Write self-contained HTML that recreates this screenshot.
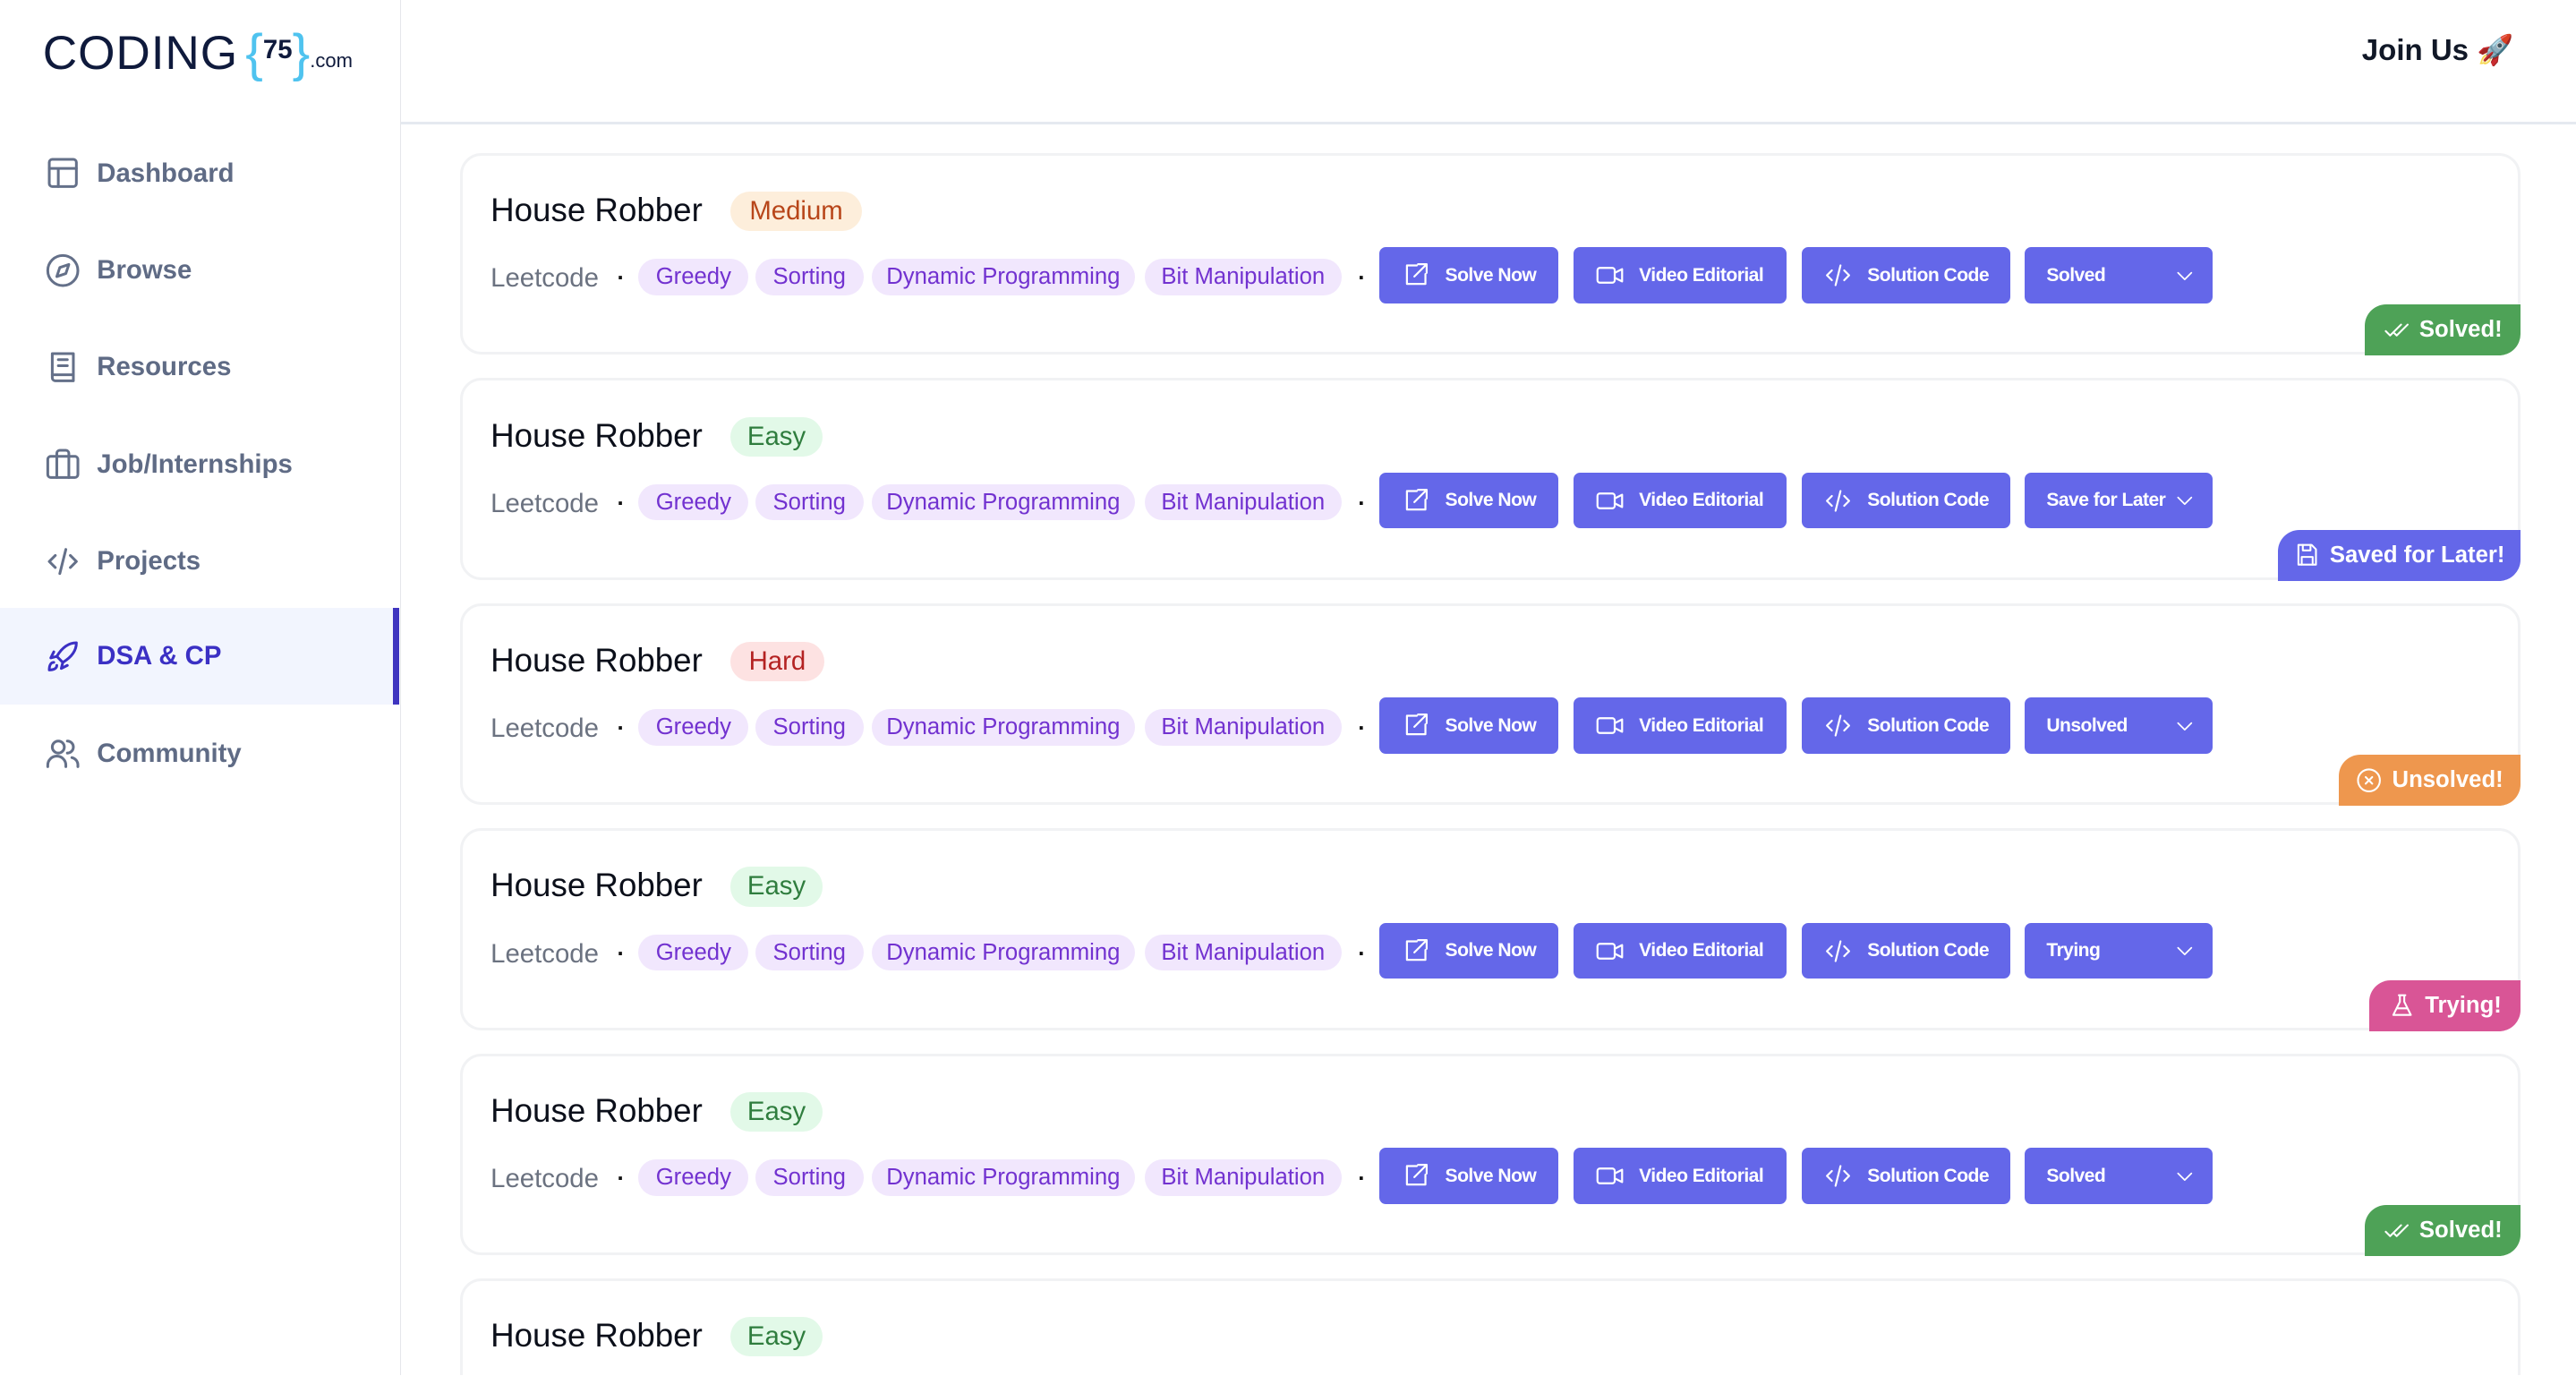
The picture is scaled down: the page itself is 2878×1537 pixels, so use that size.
<!DOCTYPE html>
<html><head><meta charset="utf-8">
<style>
*{box-sizing:border-box;margin:0;padding:0}
html,body{width:2878px;height:1537px;overflow:hidden;background:#fff}
#w{zoom:1.8355;width:1568px;height:837px;position:relative;font-family:"Liberation Sans",sans-serif;overflow:hidden}
.side{position:absolute;left:0;top:0;width:244px;height:837px;border-right:1px solid #e5e7eb}
.logo{position:absolute;left:26px;top:14px;white-space:nowrap;color:#0f1a3c}
.logo .c{font-size:29px;letter-spacing:0.5px;font-weight:300;vertical-align:middle}
.logo .b{color:#4fc3ef;font-size:32px;vertical-align:middle}
.logo .n{font-size:16px;font-weight:bold;vertical-align:middle;position:relative;top:-2px}
.logo .d{font-size:12px;vertical-align:middle;position:relative;top:5px}
.nav{position:absolute;left:0;width:243px;height:59px;display:flex;align-items:center;padding-left:27px;color:#5f6b85;font-size:16px;font-weight:bold}
.nav svg{width:22px;height:22px;margin-right:10px;fill:none;stroke:#647089;stroke-width:1.8;stroke-linecap:round;stroke-linejoin:round}
.nav.act{background:#f2f5fe;color:#3b30c4;border-right:4px solid #3f35c0}
.nav.act svg{stroke:#3b30c4}
.hdr{position:absolute;left:244px;top:0;right:0;height:76px;border-bottom:2px solid #e5e9f0}
.join{position:absolute;right:38px;top:20px;font-size:18px;font-weight:bold;color:#111827}
.card{position:absolute;left:280px;width:1254px;height:123px;border:2px solid #f1f2f4;border-radius:13px;background:#fff}
.t{position:absolute;left:17px;top:22px;font-size:20px;color:#0b0f1a}
.pill{position:absolute;left:163px;top:22px;height:24px;border-radius:12px;font-size:16px;line-height:24px;text-align:center}
.med{background:#fdeedb;color:#b8461a;width:80px}
.easy{background:#e2f9e8;color:#2f7d3e;width:56px}
.hard{background:#fde2e2;color:#b42222;width:57px}
.lc{position:absolute;left:17px;top:64px;line-height:22px;font-size:16px;color:#6b7280}
.dot{position:absolute;top:64px;line-height:22px;font-size:14px;color:#111;font-weight:bold}
.tag{position:absolute;top:63px;height:22px;line-height:22px;border-radius:11px;background:#f1e7fd;color:#7232d0;font-size:14px;text-align:center}
.btn{position:absolute;top:56px;height:34px;background:#6467e9;border-radius:4px;color:#fff;font-size:11.5px;letter-spacing:-0.3px;font-weight:bold;display:flex;align-items:center;padding-left:13px;white-space:nowrap}
.btn svg{width:18px;height:18px;margin-right:9px;fill:none;stroke:#fff;stroke-width:1.6;stroke-linecap:round;stroke-linejoin:round}
.dd{padding-left:13px}
.dd svg{position:absolute;right:10px;top:10px;width:14px;height:14px;margin:0}
.st{position:absolute;right:-2px;bottom:-2px;height:31px;border-radius:13px 0 13px 0;color:#fff;font-size:14px;font-weight:bold;display:flex;align-items:center;justify-content:center;white-space:nowrap}
.st svg{width:16px;height:16px;margin-right:6px;fill:none;stroke:#fff;stroke-width:1.7;stroke-linecap:round;stroke-linejoin:round}
</style></head><body><div id="w">
<div class="side">
 <div class="logo"><span class="c">CODING</span> <span class="b">{</span><span class="n">75</span><span class="b">}</span><span class="d">.com</span></div>
 <div class="nav" style="top:76px"><svg viewBox="0 0 24 24"><rect x="3" y="3" width="18" height="18" rx="2"/><path d="M3 9h18M9 9v12"/></svg>Dashboard</div>
 <div class="nav" style="top:135px"><svg viewBox="0 0 24 24"><circle cx="12" cy="12" r="10"/><path d="M16 8l-2 6-6 2 2-6z"/></svg>Browse</div>
 <div class="nav" style="top:194px"><svg viewBox="0 0 24 24"><path d="M5 3h14v18H7a2 2 0 0 1-2-2z"/><path d="M5 17h14M9 7h6M9 11h6"/></svg>Resources</div>
 <div class="nav" style="top:253px"><svg viewBox="0 0 24 24"><rect x="2" y="7" width="20" height="14" rx="2"/><path d="M8 21V5a2 2 0 0 1 2-2h4a2 2 0 0 1 2 2v16"/></svg>Job/Internships</div>
 <div class="nav" style="top:312px"><svg viewBox="0 0 24 24"><path d="M7 8l-4 4 4 4M17 8l4 4-4 4M14 4l-4 16"/></svg>Projects</div>
 <div class="nav act" style="top:370px"><svg viewBox="0 0 24 24"><path d="M21 3c-6 0-10 4-13 9l4 4c5-3 9-7 9-13z"/><path d="M8 12l-4 1 2-4M12 16l-1 4 4-2"/><path d="M6 16c-2 0-3 2-3 5 3 0 5-1 5-3"/></svg>DSA &amp; CP</div>
 <div class="nav" style="top:429px"><svg viewBox="0 0 24 24"><circle cx="9" cy="8" r="4"/><path d="M2 21v-1a6 6 0 0 1 12 0v1M15 4a4 4 0 0 1 0 8M18 15a5 5 0 0 1 4 5v1"/></svg>Community</div>
</div>
<div class="hdr"><div class="join">Join Us 🚀</div></div>

<div class="card" style="top:93px">
 <div class="t">House Robber</div><div class="pill med">Medium</div>
 <div class="lc">Leetcode</div><div class="dot" style="left:94px">·</div>
 <div class="tag" style="left:107px;width:67px">Greedy</div><div class="tag" style="left:178px;width:66px">Sorting</div><div class="tag" style="left:249px;width:160px">Dynamic Programming</div><div class="tag" style="left:415px;width:120px">Bit Manipulation</div>
 <div class="dot" style="left:545px">·</div>
 <div class="btn" style="left:558px;width:109px"><svg viewBox="0 0 24 24"><path d="M13 4H5v15h15v-8M14 3h7v7M21 3l-10 10"/></svg>Solve Now</div>
 <div class="btn" style="left:676px;width:130px"><svg viewBox="0 0 24 24"><rect x="2" y="6" width="14" height="12" rx="2"/><path d="M16 10l6-3v10l-6-3"/></svg>Video Editorial</div>
 <div class="btn" style="left:815px;width:127px"><svg viewBox="0 0 24 24"><path d="M7 8l-4 4 4 4M17 8l4 4-4 4M14 4l-4 16"/></svg>Solution Code</div>
 <div class="btn dd" style="left:951px;width:114px">Solved<svg viewBox="0 0 24 24"><path d="M5 9l7 7 7-7"/></svg></div>
 <div class="st" style="width:95px;background:#4ea257"><svg viewBox="0 0 24 24"><path d="M2 13l4 4L16 7M10 15l2 2 10-10"/></svg>Solved!</div>
</div>

<div class="card" style="top:230px">
 <div class="t">House Robber</div><div class="pill easy">Easy</div>
 <div class="lc">Leetcode</div><div class="dot" style="left:94px">·</div>
 <div class="tag" style="left:107px;width:67px">Greedy</div><div class="tag" style="left:178px;width:66px">Sorting</div><div class="tag" style="left:249px;width:160px">Dynamic Programming</div><div class="tag" style="left:415px;width:120px">Bit Manipulation</div>
 <div class="dot" style="left:545px">·</div>
 <div class="btn" style="left:558px;width:109px"><svg viewBox="0 0 24 24"><path d="M13 4H5v15h15v-8M14 3h7v7M21 3l-10 10"/></svg>Solve Now</div>
 <div class="btn" style="left:676px;width:130px"><svg viewBox="0 0 24 24"><rect x="2" y="6" width="14" height="12" rx="2"/><path d="M16 10l6-3v10l-6-3"/></svg>Video Editorial</div>
 <div class="btn" style="left:815px;width:127px"><svg viewBox="0 0 24 24"><path d="M7 8l-4 4 4 4M17 8l4 4-4 4M14 4l-4 16"/></svg>Solution Code</div>
 <div class="btn dd" style="left:951px;width:114px">Save for Later<svg viewBox="0 0 24 24"><path d="M5 9l7 7 7-7"/></svg></div>
 <div class="st" style="width:148px;background:#6467e9"><svg viewBox="0 0 24 24"><path d="M4 3h12l4 4v14H4z"/><path d="M8 3v5h7V3M7 21v-7h10v7"/></svg>Saved for Later!</div>
</div>

<div class="card" style="top:367px">
 <div class="t">House Robber</div><div class="pill hard">Hard</div>
 <div class="lc">Leetcode</div><div class="dot" style="left:94px">·</div>
 <div class="tag" style="left:107px;width:67px">Greedy</div><div class="tag" style="left:178px;width:66px">Sorting</div><div class="tag" style="left:249px;width:160px">Dynamic Programming</div><div class="tag" style="left:415px;width:120px">Bit Manipulation</div>
 <div class="dot" style="left:545px">·</div>
 <div class="btn" style="left:558px;width:109px"><svg viewBox="0 0 24 24"><path d="M13 4H5v15h15v-8M14 3h7v7M21 3l-10 10"/></svg>Solve Now</div>
 <div class="btn" style="left:676px;width:130px"><svg viewBox="0 0 24 24"><rect x="2" y="6" width="14" height="12" rx="2"/><path d="M16 10l6-3v10l-6-3"/></svg>Video Editorial</div>
 <div class="btn" style="left:815px;width:127px"><svg viewBox="0 0 24 24"><path d="M7 8l-4 4 4 4M17 8l4 4-4 4M14 4l-4 16"/></svg>Solution Code</div>
 <div class="btn dd" style="left:951px;width:114px">Unsolved<svg viewBox="0 0 24 24"><path d="M5 9l7 7 7-7"/></svg></div>
 <div class="st" style="width:111px;background:#ee974e"><svg viewBox="0 0 24 24"><circle cx="12" cy="12" r="10"/><path d="M9 9l6 6M15 9l-6 6"/></svg>Unsolved!</div>
</div>

<div class="card" style="top:504px">
 <div class="t">House Robber</div><div class="pill easy">Easy</div>
 <div class="lc">Leetcode</div><div class="dot" style="left:94px">·</div>
 <div class="tag" style="left:107px;width:67px">Greedy</div><div class="tag" style="left:178px;width:66px">Sorting</div><div class="tag" style="left:249px;width:160px">Dynamic Programming</div><div class="tag" style="left:415px;width:120px">Bit Manipulation</div>
 <div class="dot" style="left:545px">·</div>
 <div class="btn" style="left:558px;width:109px"><svg viewBox="0 0 24 24"><path d="M13 4H5v15h15v-8M14 3h7v7M21 3l-10 10"/></svg>Solve Now</div>
 <div class="btn" style="left:676px;width:130px"><svg viewBox="0 0 24 24"><rect x="2" y="6" width="14" height="12" rx="2"/><path d="M16 10l6-3v10l-6-3"/></svg>Video Editorial</div>
 <div class="btn" style="left:815px;width:127px"><svg viewBox="0 0 24 24"><path d="M7 8l-4 4 4 4M17 8l4 4-4 4M14 4l-4 16"/></svg>Solution Code</div>
 <div class="btn dd" style="left:951px;width:114px">Trying<svg viewBox="0 0 24 24"><path d="M5 9l7 7 7-7"/></svg></div>
 <div class="st" style="width:92px;background:#d95596"><svg viewBox="0 0 24 24"><path d="M9 3h6M10 3v6L4 21h16L14 9V3M7 15h10"/></svg>Trying!</div>
</div>

<div class="card" style="top:641px">
 <div class="t">House Robber</div><div class="pill easy">Easy</div>
 <div class="lc">Leetcode</div><div class="dot" style="left:94px">·</div>
 <div class="tag" style="left:107px;width:67px">Greedy</div><div class="tag" style="left:178px;width:66px">Sorting</div><div class="tag" style="left:249px;width:160px">Dynamic Programming</div><div class="tag" style="left:415px;width:120px">Bit Manipulation</div>
 <div class="dot" style="left:545px">·</div>
 <div class="btn" style="left:558px;width:109px"><svg viewBox="0 0 24 24"><path d="M13 4H5v15h15v-8M14 3h7v7M21 3l-10 10"/></svg>Solve Now</div>
 <div class="btn" style="left:676px;width:130px"><svg viewBox="0 0 24 24"><rect x="2" y="6" width="14" height="12" rx="2"/><path d="M16 10l6-3v10l-6-3"/></svg>Video Editorial</div>
 <div class="btn" style="left:815px;width:127px"><svg viewBox="0 0 24 24"><path d="M7 8l-4 4 4 4M17 8l4 4-4 4M14 4l-4 16"/></svg>Solution Code</div>
 <div class="btn dd" style="left:951px;width:114px">Solved<svg viewBox="0 0 24 24"><path d="M5 9l7 7 7-7"/></svg></div>
 <div class="st" style="width:95px;background:#4ea257"><svg viewBox="0 0 24 24"><path d="M2 13l4 4L16 7M10 15l2 2 10-10"/></svg>Solved!</div>
</div>

<div class="card" style="top:778px">
 <div class="t">House Robber</div><div class="pill easy">Easy</div>
</div>
</div></body></html>
